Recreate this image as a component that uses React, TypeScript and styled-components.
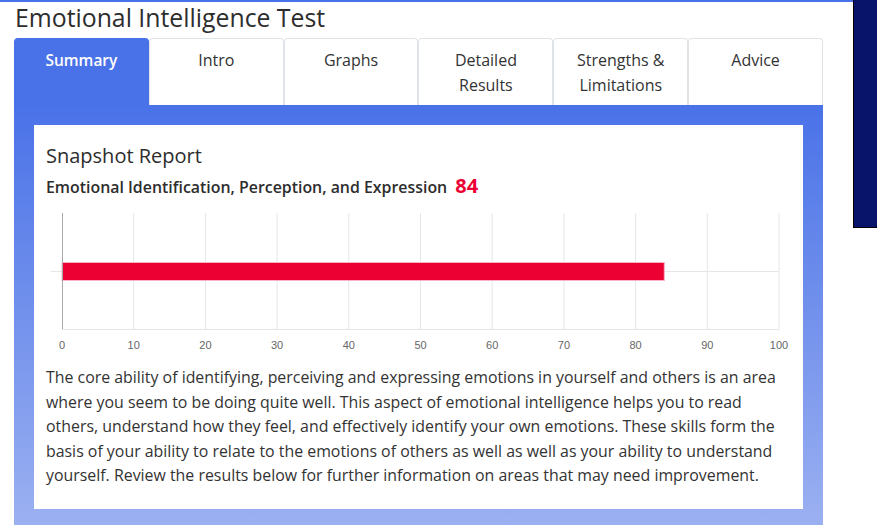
import React from 'react';
import styled, {createGlobalStyle} from 'styled-components';

const GlobalStyle = createGlobalStyle`
  html, body {
    margin: 0;
    padding: 0;
    background: #fff;
  }
  body {
    font-family: "Open Sans", Lato, Arial, sans-serif;
    color: #333;
  }
`;

const tabs = [
    {label: 'Summary', active: true},
    {label: 'Intro'},
    {label: 'Graphs'},
    {label: 'Detailed Results', lines: ['Detailed', 'Results']},
    {label: 'Strengths & Limitations', lines: ['Strengths &', 'Limitations']},
    {label: 'Advice'},
];

const score = 84;
const ticks = [0, 10, 20, 30, 40, 50, 60, 70, 80, 90, 100];

const Chart: React.FC = () => {
    const x0 = 16;
    const step = 71.7;
    const xAt = (v: number) => x0 + (v / 10) * step;
    return (
        <ChartSvg width="760" height="146" viewBox="0 0 760 146">
            {ticks.slice(1).map(t => (
                <line key={t} x1={xAt(t)} x2={xAt(t)} y1={5} y2={121} stroke="#e6e6e6" strokeWidth="1"/>
            ))}
            <line x1={5} x2={xAt(100)} y1={63.5} y2={63.5} stroke="#e6e6e6" strokeWidth="1"/>
            <line x1={x0} x2={xAt(100)} y1={121.5} y2={121.5} stroke="#e6e6e6" strokeWidth="1"/>
            <rect x={x0} y={54.5} width={xAt(score) - x0} height={18} fill="#ec0034" stroke="#f7b3c3" strokeWidth="1"/>
            <line x1={x0 + 0.5} x2={x0 + 0.5} y1={5} y2={121} stroke="#a8a8a8" strokeWidth="1"/>
            {ticks.map(t => (
                <text key={t} x={xAt(t)} y={141} textAnchor="middle" fontSize="11"
                      fontFamily="'Liberation Sans', Arial, sans-serif" fill="#666">{t}</text>
            ))}
        </ChartSvg>
    );
};

const App: React.FC = () => {
    return (
        <Page>
            <GlobalStyle/>
            <Main>
                <Title>Emotional Intelligence Test</Title>
                <TabBar>
                    {tabs.map(t => (
                        <Tab key={t.label} active={t.active}>
                            {t.lines ? t.lines.map(l => <span key={l}>{l}</span>) : <span>{t.label}</span>}
                        </Tab>
                    ))}
                </TabBar>
                <Panel>
                    <Card>
                        <CardTitle>Snapshot Report</CardTitle>
                        <ScaleName>
                            Emotional Identification, Perception, and Expression
                            <Score>{score}</Score>
                        </ScaleName>
                        <Chart/>
                        <Text>
                            The core ability of identifying, perceiving and expressing emotions in yourself and
                            others is an area where you seem to be doing quite well. This aspect of emotional
                            intelligence helps you to read others, understand how they feel, and effectively
                            identify your own emotions. These skills form the basis of your ability to relate to
                            the emotions of others as well as well as your ability to understand yourself. Review
                            the results below for further information on areas that may need improvement.
                        </Text>
                    </Card>
                </Panel>
            </Main>
            <SideBlock/>
        </Page>
    );
};

export default App;

const Page = styled.div`
  display: flex;
  align-items: flex-start;
  width: 877px;
  height: 525px;
  overflow: hidden;
`;

const Main = styled.div`
  width: 854px;
  border-top: 2px solid #4a72e8;
  padding-left: 14px;
  box-sizing: border-box;
`;

const SideBlock = styled.div`
  width: 23px;
  height: 227px;
  background: #08146a;
  border-left: 1px solid #000;
  border-bottom: 1px solid #000;
`;

const Title = styled.h1`
  margin: 0;
  height: 36px;
  line-height: 30px;
  font-size: 24.8px;
  font-weight: 400;
  color: #2d2d2d;
  padding-left: 1px;
`;

const TabBar = styled.div`
  display: grid;
  grid-template-columns: repeat(6, 1fr);
  width: 809px;
`;

const Tab = styled.div<{active?: boolean}>`
  height: 67px;
  box-sizing: border-box;
  display: flex;
  flex-direction: column;
  align-items: center;
  padding-top: 9px;
  font-size: ${p => p.active ? '15.5px' : '16px'};
  line-height: 25px;
  border-radius: 4px 4px 0 0;
  background: ${p => p.active ? '#4a72e8' : '#fff'};
  color: ${p => p.active ? '#fff' : '#333'};
  border: 1px solid ${p => p.active ? '#4a72e8' : '#dfe3e8'};
  border-bottom: none;
  font-weight: ${p => p.active ? 600 : 400};
`;

const Panel = styled.div`
  width: 809px;
  box-sizing: border-box;
  padding: 20px 20px 20px;
  background: linear-gradient(180deg, #4a72e8 0%, #9cb1f1 100%);
`;

const Card = styled.div`
  background: #fff;
  padding: 18px 12px 22px;
  height: 384px;
  box-sizing: border-box;
`;

const CardTitle = styled.h2`
  margin: 0;
  font-size: 20px;
  font-weight: 400;
  line-height: 26px;
  color: #2d2d2d;
`;

const ScaleName = styled.div`
  margin-top: 4px;
  font-size: 15.9px;
  font-weight: 600;
  line-height: 26px;
  color: #2d2d2d;
`;

const Score = styled.span`
  margin-left: 8px;
  font-size: 20px;
  font-weight: 700;
  color: #ec0034;
`;

const ChartSvg = styled.svg`
  display: block;
  margin-top: 8px;
`;

const Text = styled.p`
  margin: 11px 0 0;
  font-size: 15.9px;
  line-height: 24.5px;
  color: #333;
`;
